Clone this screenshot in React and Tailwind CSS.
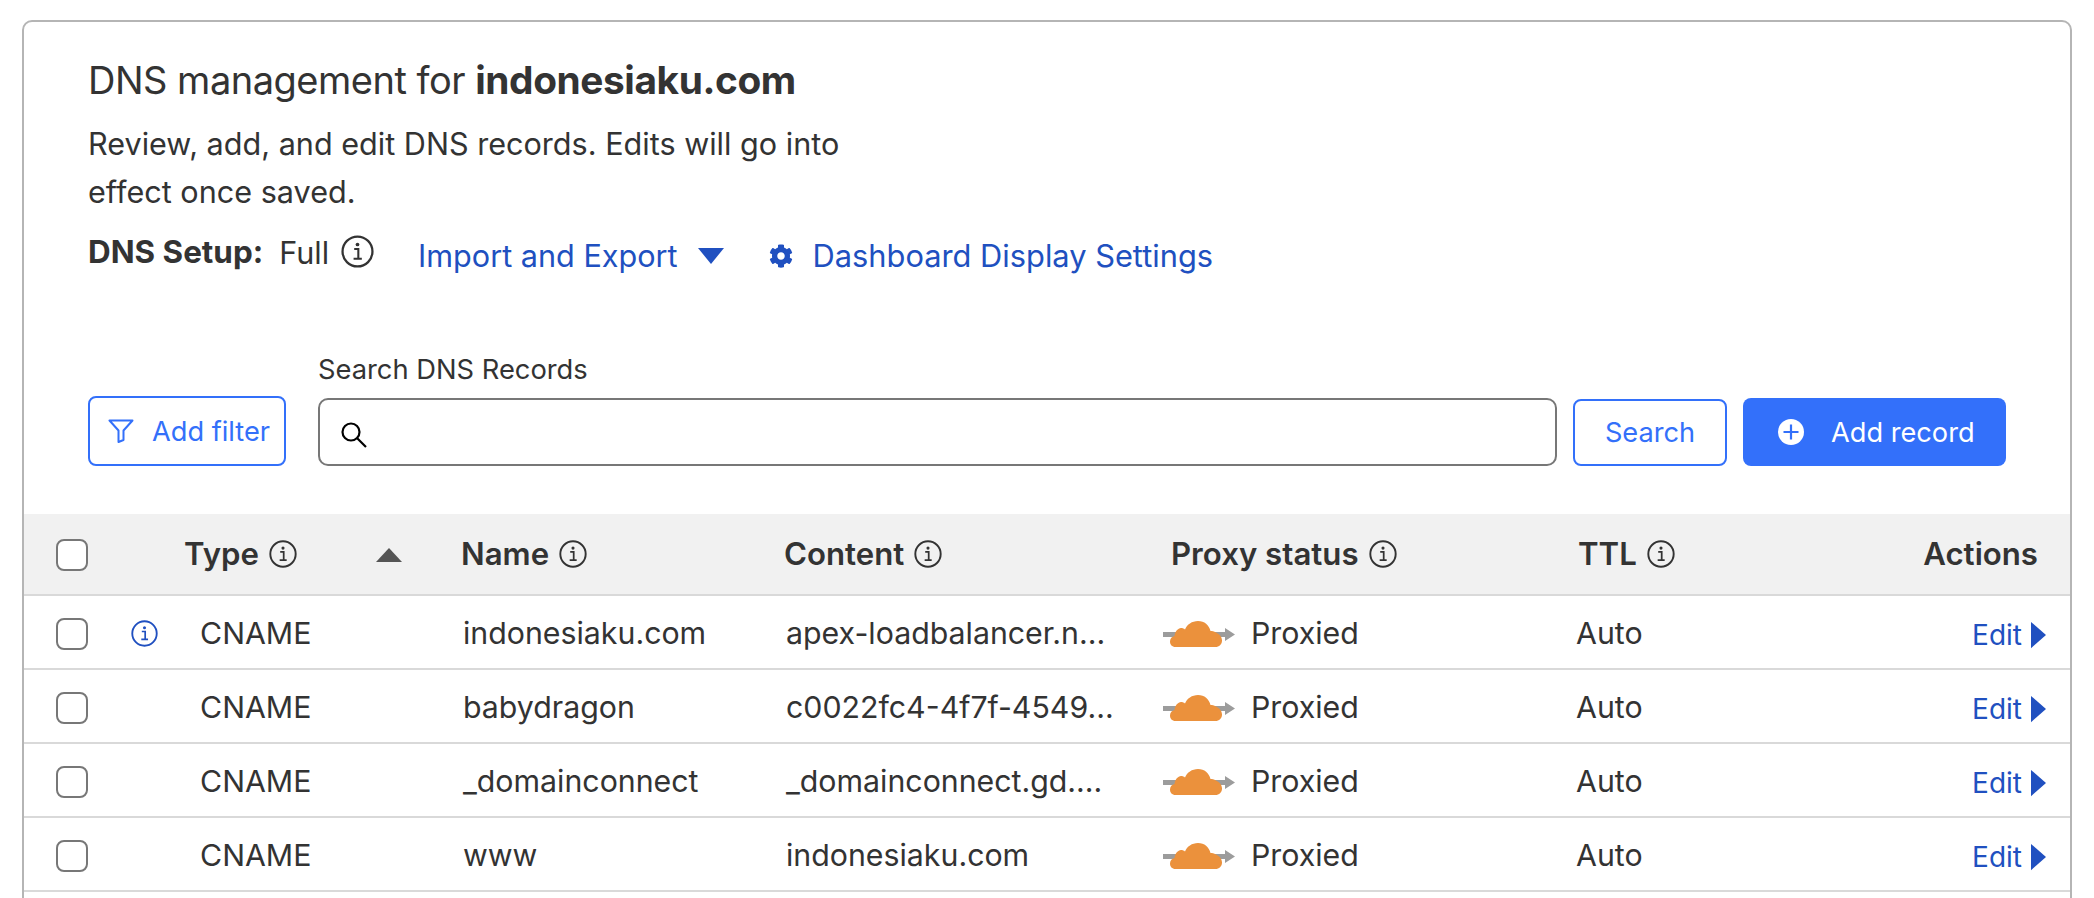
import React from "react";
import { FaCog } from "react-icons/fa";

const Info = ({ className = "" }) => (
  <svg viewBox="0 0 32 32" className={className} fill="none" stroke="currentColor">
    <circle cx="16" cy="16" r="14.5" strokeWidth="2.2" />
    <circle cx="16" cy="9.2" r="1.8" fill="currentColor" stroke="none" />
    <path d="M12.8 13.6h4v9.2M12.2 23h8" strokeWidth="2" />
  </svg>
);

const Check = () => <span className="block w-[32px] h-[32px] rounded-[8px] border-2 border-[#777] bg-white" />;

const Cloud = () => (
  <svg viewBox="0 0 72 28" className="w-[72px] h-[28px] mt-[1px]">
    <path d="M0 12h14v5H0z" fill="#9c9c9c" />
    <path d="M48 12h14V8l10 6.500L62 21v-4H48z" fill="#9c9c9c" />
    <path d="M12.500 27C9 27 7 24.500 7 21.500C7 18.500 9 16.500 11.500 16C12 11 15 8.500 18 8C19.500 8 21 8.500 22 9.500C24 4.500 29 1 35 1C41.500 1 46 5 47.500 11C49 11 51 11 53 12.500C56.500 14 59 17 59 20.500C59 24.500 56 27 52.500 27Z" fill="#eb913c" />
  </svg>
);

const rows = [
  ["indonesiaku.com", "apex-loadbalancer.n...", true],
  ["babydragon", "c0022fc4-4f7f-4549...", false],
  ["_domainconnect", "_domainconnect.gd....", false],
  ["www", "indonesiaku.com", false],
];

const cols = "grid grid-cols-[107px_53px_277px_323px_379px_413px_1fr] items-center";

export default function App() {
  return (
    <div className="h-[898px] overflow-hidden bg-white pt-[20px] pl-[22px] text-[#333] [font-family:Inter,'Liberation_Sans',sans-serif]">
      <div className="w-[2050px] h-[900px] border-2 border-[#b5b5b5] rounded-[10px] bg-white">
        <div className="pl-[64px] pt-[33px]">
          <h1 className="text-[38px] leading-[50px] font-normal tracking-[-0.5px]">
            DNS management for <strong className="font-bold text-[38.8px] tracking-[-0.4px]">indonesiaku.com</strong>
          </h1>
          <p className="mt-[15px] w-[780px] text-[30.6px] leading-[48px]">
            Review, add, and edit DNS records. Edits will go into effect once saved.
          </p>
          <div className="mt-[13px] flex items-center h-[48px] text-[30.6px]">
            <span className="font-bold text-[31.4px]">DNS Setup:</span>
            <span className="ml-[16px]">Full</span>
            <Info className="ml-[12px] w-[33px] h-[33px] -mt-[4px]" />
            <button className="ml-[44px] mt-[6px] flex items-center text-[#2050c0]">
              Import and Export
              <svg viewBox="0 0 26 16" className="ml-[20px] w-[26px] h-[16px]"><path d="M0 0h26L13 16z" fill="currentColor" /></svg>
            </button>
            <button className="ml-[45px] mt-[6px] flex items-center text-[#2050c0]">
              <FaCog className="w-[24px] h-[24px]" />
              <span className="ml-[20px] text-[30.8px]">Dashboard Display Settings</span>
            </button>
          </div>
        </div>

        <div className="pl-[64px] mt-[81px] flex items-end h-[108px]">
          <button className="w-[198px] h-[70px] rounded-[8px] border-2 border-[#3370fa] text-[#3370fa] text-[27.2px] flex items-center pl-[18px]">
            <svg viewBox="0 0 26 24" className="w-[26px] h-[24px]" fill="none" stroke="currentColor" strokeWidth="2"><path d="M1.500 1.500h23l-9 10v9.500l-5 2v-11.500z" strokeLinejoin="round" /></svg>
            <span className="ml-[18px] pt-[2px]">Add filter</span>
          </button>
          <div className="ml-[32px]">
            <label className="block text-[27.300px] leading-[38px] mb-[9px]">Search DNS Records</label>
            <div className="w-[1239px] h-[68px] rounded-[10px] border-2 border-[#777] flex items-center pl-[20px]">
              <svg viewBox="0 0 28 28" className="w-[28px] h-[28px] mt-[6px]" fill="none" stroke="#000" strokeWidth="2.200"><circle cx="11" cy="11" r="8.500" /><path d="M17 17l9 9" /></svg>
            </div>
          </div>
          <button className="ml-[16px] w-[154px] h-[67px] pt-[2px] rounded-[8px] border-2 border-[#3370fa] text-[#3370fa] text-[27.2px]">Search</button>
          <button className="ml-[16px] w-[263px] h-[68px] rounded-[8px] bg-[#3370fa] text-white text-[27.2px] flex items-center pl-[35px]">
            <svg viewBox="0 0 26 26" className="w-[26px] h-[26px]"><circle cx="13" cy="13" r="13" fill="#fff" /><path d="M13 5.500v15M5.500 13h15" stroke="#3370fa" strokeWidth="2.200" /></svg>
            <span className="ml-[27px] pt-[2px]">Add record</span>
          </button>
        </div>

        <div className={`${cols} mt-[48px] h-[82px] pt-[1px] bg-[#f1f1f1] border-b-2 border-[#d9d9d9] text-[31.2px] font-semibold`}>
          <div className="pl-[32px]"><Check /></div>
          <div />
          <div className="flex items-center relative">
            Type <Info className="ml-[10px] w-[28px] h-[28px]" />
            <svg viewBox="0 0 26 14" className="absolute left-[192px] top-[17px] w-[26px] h-[14px]"><path d="M13 0l13 14H0z" fill="#555" /></svg>
          </div>
          <div className="flex items-center">Name <Info className="ml-[10px] w-[28px] h-[28px]" /></div>
          <div className="flex items-center">Content <Info className="ml-[10px] w-[28px] h-[28px]" /></div>
          <div className="flex items-center pl-[8px]">Proxy status <Info className="ml-[10px] w-[28px] h-[28px]" /></div>
          <div className="flex items-center justify-between pr-[32px] pl-[2px]">
            <span className="flex items-center">TTL <Info className="ml-[10px] w-[28px] h-[28px]" /></span>
            <span>Actions</span>
          </div>
        </div>

        {rows.map(([name, content, info]) => (
          <div key={name} className={`${cols} h-[74px] pt-[3px] border-b-2 border-[#d9d9d9] text-[30.3px]`}>
            <div className="pl-[32px]"><Check /></div>
            <div>{info && <Info className="w-[27px] h-[27px] text-[#2050c0]" />}</div>
            <div className="pl-[16px]">CNAME</div>
            <div className="pl-[2px]">{name}</div>
            <div className="pl-[2px]">{content}</div>
            <div className="flex items-center">
              <Cloud />
              <span className="ml-[16px]">Proxied</span>
            </div>
            <div className="flex items-center justify-between pr-[24px]">
              <span>Auto</span>
              <button className="flex items-center text-[#2050c0] text-[28px] mt-[2px]">
                Edit
                <svg viewBox="0 0 16 28" className="ml-[9px] w-[15px] h-[28px]"><path d="M0 0l16 14L0 28z" fill="currentColor" /></svg>
              </button>
            </div>
          </div>
        ))}
      </div>
    </div>
  );
}
